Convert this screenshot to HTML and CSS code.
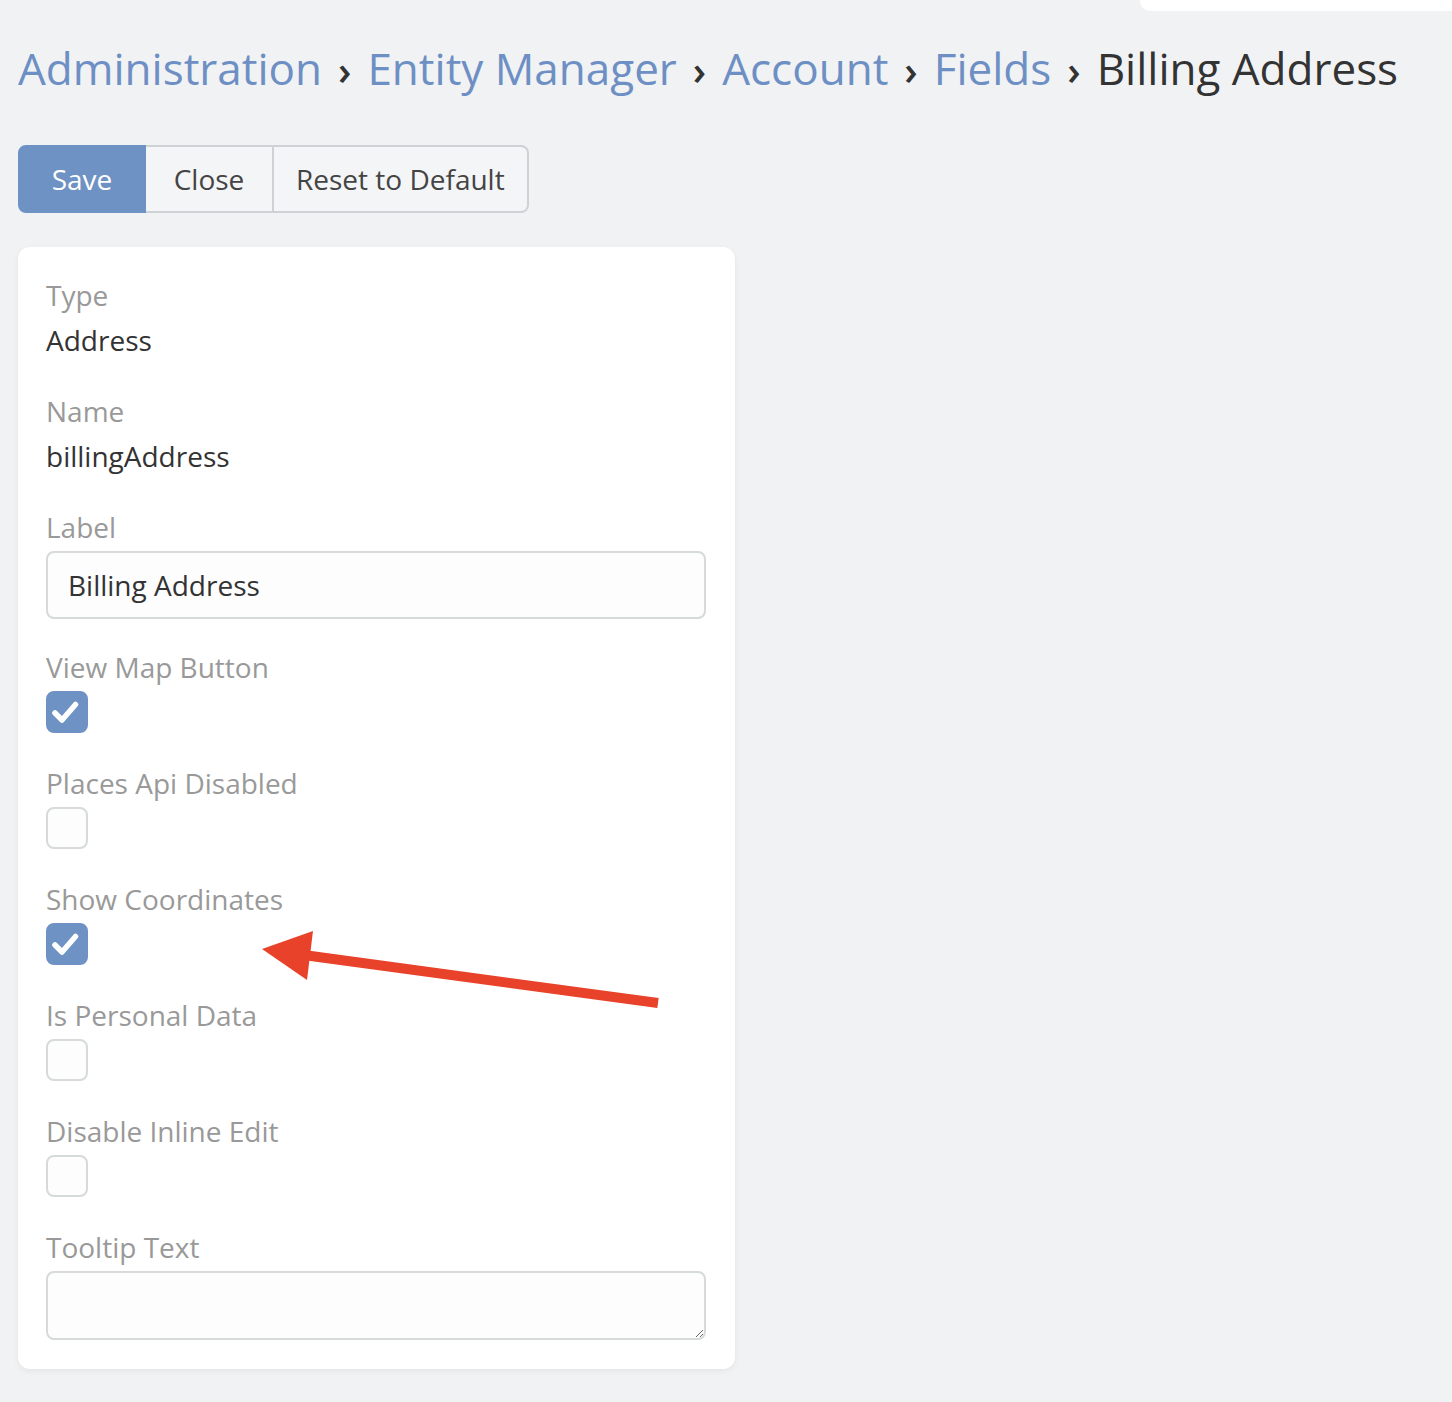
FILE: index.html
```html
<!DOCTYPE html>
<html lang="en">
<head>
<meta charset="utf-8">
<title>Billing Address</title>
<link rel="stylesheet" href="styles.css">
</head>
<body>
<div class="topbar"><div class="topbar-tab"></div></div>
<main class="page">
  <h1 class="breadcrumb">
    <a class="crumb-link" href="#">Administration</a><span class="sep">›</span><a class="crumb-link" href="#">Entity Manager</a><span class="sep">›</span><a class="crumb-link" href="#">Account</a><span class="sep">›</span><a class="crumb-link" href="#">Fields</a><span class="sep">›</span><span class="crumb-current">Billing Address</span>
  </h1>
  <div class="btn-group">
    <button class="btn btn-primary">Save</button><button class="btn">Close</button><button class="btn btn-last">Reset to Default</button>
  </div>
  <section class="card">
    <div class="field">
      <div class="field-label">Type</div>
      <div class="field-value">Address</div>
    </div>
    <div class="field">
      <div class="field-label">Name</div>
      <div class="field-value">billingAddress</div>
    </div>
    <div class="field field-input">
      <div class="field-label">Label</div>
      <input class="text-input" type="text" value="Billing Address">
    </div>
    <div class="field">
      <div class="field-label">View Map Button</div>
      <span class="checkbox checked"><svg viewBox="0 0 42 42" width="42" height="42"><path d="M9 22 L16 29 L29.5 13.5" fill="none" stroke="#fff" stroke-width="5.5" stroke-linecap="round" stroke-linejoin="round"/></svg></span>
    </div>
    <div class="field">
      <div class="field-label">Places Api Disabled</div>
      <span class="checkbox"></span>
    </div>
    <div class="field">
      <div class="field-label">Show Coordinates</div>
      <span class="checkbox checked"><svg viewBox="0 0 42 42" width="42" height="42"><path d="M9 22 L16 29 L29.5 13.5" fill="none" stroke="#fff" stroke-width="5.5" stroke-linecap="round" stroke-linejoin="round"/></svg></span>
    </div>
    <div class="field">
      <div class="field-label">Is Personal Data</div>
      <span class="checkbox"></span>
    </div>
    <div class="field">
      <div class="field-label">Disable Inline Edit</div>
      <span class="checkbox"></span>
    </div>
    <div class="field field-last">
      <div class="field-label">Tooltip Text</div>
      <textarea class="text-area"></textarea>
    </div>
    <svg class="arrow" viewBox="18 246 717 1124" width="717" height="1124">
      <line x1="300" y1="953.5" x2="658" y2="1002" stroke="#e8422a" stroke-width="10"/>
      <polygon points="262,948 313,930 307,979" fill="#e8422a"/>
    </svg>
  </section>
</main>
</body>
</html>
```
FILE: styles.css
```css
* { box-sizing: border-box; }
html, body {
  margin: 0;
  padding: 0;
  background: #f1f2f4;
  font-family: "Open Sans", "Liberation Sans", sans-serif;
  color: #333;
}
.topbar {
  display: flex;
  justify-content: flex-end;
  height: 11px;
}
.topbar-tab {
  width: 312px;
  height: 11px;
  background: #fff;
  border-bottom-left-radius: 10px;
}
.page {
  padding: 0 0 30px 18px;
}
.breadcrumb {
  margin: 31px 0 0 0;
  font-size: 44px;
  font-weight: 400;
  line-height: 52px;
  white-space: nowrap;
}
.crumb-link {
  color: #6d8fc4;
  text-decoration: none;
}
.sep {
  display: inline-block;
  color: #333;
  margin: 0 16px 0 16px;
  font-weight: 600;
  font-size: 40px;
}
.crumb-current { color: #333; }
.btn-group {
  display: flex;
  margin-top: 49px;
}
.btn {
  height: 68px;
  min-width: 128px;
  padding: 0 22px;
  font-family: inherit;
  font-size: 28px;
  color: #444;
  background: #f4f5f6;
  border: 2px solid #ced2d4;
  border-left-width: 0;
  border-radius: 0;
  cursor: pointer;
}
.btn-primary {
  background: #6f92c4;
  border-color: #6f92c4;
  color: #fff;
  border-left-width: 2px;
  border-radius: 8px 0 0 8px;
}
.btn-last {
  border-radius: 0 8px 8px 0;
}
.card {
  position: relative;
  margin-top: 34px;
  width: 717px;
  background: #fff;
  border-radius: 12px;
  box-shadow: 0 2px 6px rgba(0, 0, 0, 0.06);
  padding: 28px 29px 29px 28px;
}
.field { margin-bottom: 30px; }
.field-input { margin-bottom: 28px; }
.field-last { margin-bottom: 0; }
.field-label {
  font-size: 28px;
  line-height: 40px;
  color: #999;
  margin-bottom: 4px;
}
.field-value {
  font-size: 28px;
  line-height: 42px;
  color: #333;
}
.text-input, .text-area {
  display: block;
  width: 100%;
  font-family: inherit;
  font-size: 28px;
  color: #333;
  background: #fdfdfd;
  border: 2px solid #d6dadb;
  border-radius: 8px;
  outline: none;
}
.text-input {
  height: 68px;
  padding: 0 20px;
}
.text-area {
  height: 69px;
  resize: vertical;
  padding: 10px 20px;
}
.checkbox {
  display: block;
  width: 42px;
  height: 42px;
  border: 2px solid #d6dadb;
  background: #fdfdfd;
  border-radius: 8px;
}
.checkbox.checked {
  background: #6f92c4;
  border-color: #6f92c4;
}
.checkbox svg {
  display: block;
  margin: -2px;
}
.arrow {
  position: absolute;
  left: 0;
  top: 0;
  pointer-events: none;
}
```
